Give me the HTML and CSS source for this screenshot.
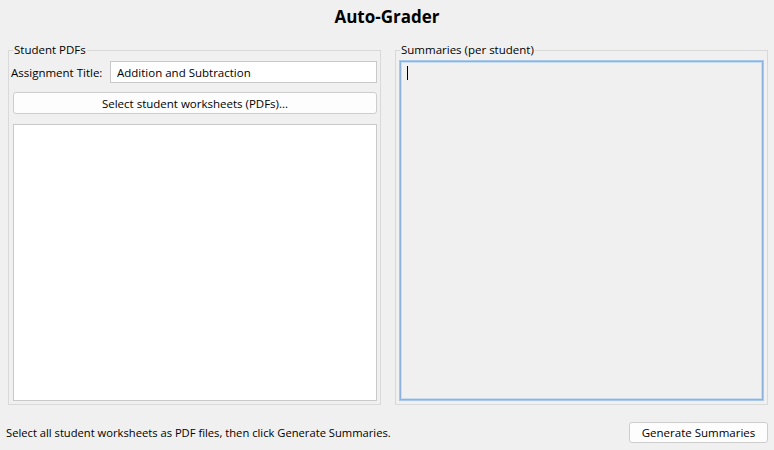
FILE: index.html
```html
<!DOCTYPE html>
<html>
<head>
<meta charset="utf-8">
<link rel="stylesheet" href="styles.css">
</head>
<body>
<div class="app">
  <h1 class="title">Auto-Grader</h1>
  <div class="panes">
    <fieldset class="group group-left">
      <legend>Student PDFs</legend>
      <div class="title-row">
        <label class="field-label">Assignment Title:</label>
        <input class="entry" type="text" value="Addition and Subtraction">
      </div>
      <button class="btn btn-wide">Select student worksheets (PDFs)...</button>
      <div class="listbox"></div>
    </fieldset>
    <fieldset class="group group-right">
      <legend>Summaries (per student)</legend>
      <div class="textarea"><span class="caret"></span></div>
    </fieldset>
  </div>
  <div class="footer">
    <span class="status">Select all student worksheets as PDF files, then click Generate Summaries.</span>
    <button class="btn btn-gen">Generate Summaries</button>
  </div>
</div>
</body>
</html>
```

FILE: styles.css
```css
html, body {
  margin: 0;
  padding: 0;
  background: #f0f0f0;
}
body {
  font-family: "Open Sans", "Noto Sans", "DejaVu Sans", sans-serif;
  font-size: 11.2px;
  color: #000;
}
.app {
  width: 774px;
  height: 450px;
  display: grid;
  grid-template-rows: 42px 363px 45px;
}
.title {
  margin: 0;
  padding-top: 6px;
  text-align: center;
  font-size: 17px;
  font-weight: 700;
  line-height: 22px;
}
.panes {
  display: grid;
  grid-template-columns: 373px 373px;
  column-gap: 14px;
  padding-left: 8px;
  height: 363px;
}
.group {
  margin: 0;
  padding: 0;
  border: 1px solid #d9d9d9;
  min-width: 0;
  display: flex;
  flex-direction: column;
  height: 363px;
  box-sizing: border-box;
}
.group legend {
  padding: 0 1px;
  margin-left: 4px;
  line-height: 16px;
  font-size: 11.5px;
}
.title-row {
  display: flex;
  align-items: center;
  margin: 3px 3px 0 2px;
}
.field-label {
  width: 99px;
  flex: none;
  font-size: 11.5px;
}
.entry {
  flex: 1;
  height: 22px;
  box-sizing: border-box;
  border: 1px solid #c9c9c9;
  background: #fff;
  padding: 0 6px;
  font: inherit;
  font-size: 11.5px;
  color: #000;
  outline: none;
}
.btn {
  box-sizing: border-box;
  height: 22px;
  border: 1px solid #cdcdcd;
  border-radius: 3px;
  background: #fdfdfd;
  font: inherit;
  font-size: 11.5px;
  color: #000;
  padding: 0;
}
.btn-wide {
  margin: 9px 3px 0 4px;
}
.listbox {
  flex: 1;
  margin: 10px 3px 3px 4px;
  background: #fff;
  border: 1px solid #c9c9c9;
}
.textarea {
  flex: 1;
  margin: 2px 3px 3px 3px;
  border: 1px solid #a9c9ea;
  box-shadow: inset 0 0 0 1px #8db3dc, inset 0 0 0 2px #c9ddf1;
  background: #f0f0f0;
  padding: 5px 0 0 7px;
}
.caret {
  display: block;
  width: 1px;
  height: 14px;
  background: #000;
}
.footer {
  display: flex;
  align-items: center;
  justify-content: space-between;
  padding: 17px 6px 0 6px;
  align-self: start;
}
.btn-gen {
  width: 139px;
  height: 21px;
}
```
